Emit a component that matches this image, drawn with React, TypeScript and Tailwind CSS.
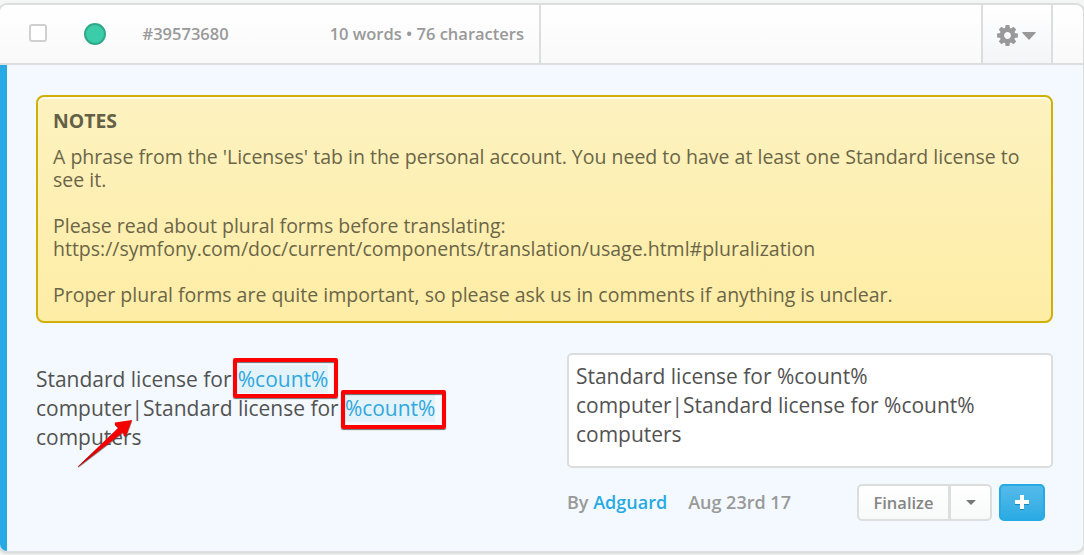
function Placeholder({ frame }: { frame: string }) {
  return (
    <span className="relative ml-[0.8px] inline-block h-[28px] bg-[#e4f2f9] align-top text-[#2fa8e0]">
      %count%
      <span className={`absolute w-[105px] rounded-[2px] border-4 border-[#fe0000] shadow-[0_1px_1px_rgba(0,0,0,0.55),inset_0_1px_1px_rgba(0,0,0,0.55)] ${frame}`} />
    </span>
  );
}

function Gear() {
  return (
    <svg width="21" height="21" viewBox="-10.5 -10.5 21 21" fill="#999" className="mt-[2px]">
      <circle r="5.6" fill="none" stroke="#999" strokeWidth="4.4" />
      {[0, 45, 90, 135, 180, 225, 270, 315].map((angle) => (
        <path key={angle} d="M-1.9-10.4H1.9L2.6-6.5H-2.6z" transform={`rotate(${angle})`} />
      ))}
    </svg>
  );
}

function Header() {
  return (
    <header className="flex h-[60px] shrink-0 items-stretch border-b-2 border-[#dcdddd] bg-linear-to-b from-white to-[#f9f9f9] text-[16.5px] font-semibold text-[#999]">
      <div className="flex w-[541px] items-center border-r-2 border-[#dcdddd] pr-[15px] pl-[29px]">
        <span className="mb-[2px] size-[18px] rounded-[3px] border-2 border-[#d0d0d0] bg-white" />
        <span className="ml-[37px] size-[22px] rounded-full border-2 border-[#2fa98a] bg-[#3bcdaa]" />
        <span className="ml-[36.5px]">#39573680</span>
        <span className="ml-auto">10 words • 76 characters</span>
      </div>
      <div className="flex-1" />
      <div className="flex w-[72px] items-center justify-center gap-[4px] border-x-2 border-[#dcdddd] bg-linear-to-b from-white to-[#f4f5f8] pr-px">
        <Gear />
        <svg width="14" height="8" viewBox="0 0 14 8" fill="#999" className="mt-[3px]"><path d="M.8 0h12.4q1.2.3.2 1.3L7 8 .6 1.3Q-.4.3.8 0" /></svg>
      </div>
      <div className="w-[30px]" />
    </header>
  );
}

function Notes() {
  return (
    <section className="h-[228px] w-[1017px] rounded-[8px] border-2 border-[#d1af09] bg-linear-to-b from-[#fdf2c0] to-[#feeda5] pt-[12px] pl-[15px] text-[19.5px] leading-[23px] whitespace-nowrap text-[#6b6547] shadow-[inset_0_2px_1px_rgba(255,255,255,0.7)]">
      <h2 className="mb-[13px] text-[19.4px] leading-[23px] font-bold text-[#636047]">NOTES</h2>
      <p>A phrase from the 'Licenses' tab in the personal account. You need to have at least one Standard license to<br />see it.</p>
      <p className="mt-[23px]">Please read about plural forms before translating:<br />https://symfony.com/doc/current/components/translation/usage.html#pluralization</p>
      <p className="mt-[23px]">Proper plural forms are quite important, so please ask us in comments if anything is unclear.</p>
    </section>
  );
}

function Arrow() {
  return (
    <svg className="absolute top-[65px] left-[40px]" width="58" height="52" viewBox="0 0 58 52">
      <defs>
        <linearGradient id="arrow" x1="0" y1="1" x2="1" y2="0">
          <stop stopColor="#b50000" />
          <stop offset=".5" stopColor="#f40000" />
        </linearGradient>
      </defs>
      <path d="M1.8 48.5 42 10 38.9 7V4.4L56 2 50.2 18H47.8L47 14.6 2.2 49z" fill="#333" opacity=".5" transform="translate(.4 .8)" />
      <path d="M1.8 48.5 42 10 38.9 7V4.4L56 2 50.2 18H47.8L47 14.6 2.2 49z" fill="url(#arrow)" />
    </svg>
  );
}

export default function App() {
  return (
    <div className="h-[555px] w-[1084px] overflow-hidden bg-[#f4f5f5] pt-[3px] font-['Open_Sans',sans-serif]">
      <main className="-ml-[2px] flex h-[550px] w-[1087px] flex-col overflow-hidden rounded-[9px] border-2 border-[#dcdddd] bg-[#f3f9fe] shadow-[0_1px_2px_rgba(0,0,0,0.1)]">
        <Header />
        <div className="flex-1 border-l-[7px] border-[#27aae3] pt-[30px] pl-[29px]">
          <Notes />
          <div className="mt-[30px] flex text-[20.98px] leading-[29px] whitespace-nowrap text-[#525252]">
            <div className="relative w-[531px] pt-[12px]">
              Standard license for <Placeholder frame="-top-[7px] -left-[5px] h-[40px]" /><br />
              computer|Standard license for <Placeholder frame="-top-[4px] -left-[4px] h-[39px]" /><br />
              computers
              <Arrow />
            </div>
            <div>
              <div className="h-[115px] w-[486px] rounded-[5px] border-2 border-[#dcdddd] bg-white pt-[7px] pl-[7px]">
                Standard license for %count%<br />computer|Standard license for %count%<br />computers
              </div>
              <div className="mt-[16px] flex h-[37px] w-[478px] items-center text-[18px] font-semibold text-[#999]">
                <span>By <a className="text-[#27aae3]">Adguard</a></span>
                <span className="ml-[21px]">Aug 23rd 17</span>
                <div className="ml-auto flex h-[37px] w-[135px] rounded-[5px] border-2 border-[#dcdddd] bg-linear-to-b from-white to-[#f8f9f9]">
                  <button className="w-[92px] border-r-3 border-[#dcdddd] text-[16.5px] font-semibold text-[#858585]">Finalize</button>
                  <button className="flex flex-1 items-center justify-center"><svg width="10" height="5" viewBox="0 0 10 5" fill="#777"><path d="M0 0h10L5 5z" /></svg></button>
                </div>
                <button className="ml-[7px] flex h-[37px] w-[46px] items-center justify-center rounded-[5px] border-2 border-[#27aae3] bg-linear-to-b from-[#54bbea] to-[#29aae3]">
                  <svg width="14" height="15" viewBox="0 0 14 15"><path d="M5 1h4v5h5v4H9v5H5v-5H0V6h5z" fill="#178abd" /><path d="M5 0h4v5h5v4H9v5H5V9H0V5h5z" fill="#fff" /></svg>
                </button>
              </div>
            </div>
          </div>
        </div>
      </main>
    </div>
  );
}
